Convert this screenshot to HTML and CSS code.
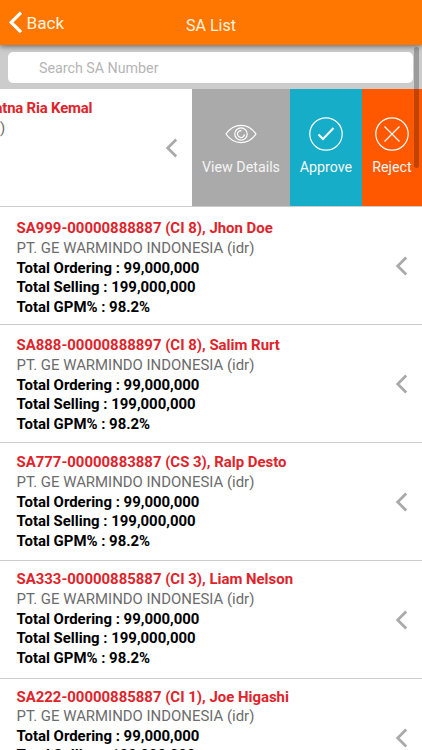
FILE: index.html
```
<!DOCTYPE html>
<html lang="en">
<head>
<meta charset="utf-8">
<title>SA List</title>
<link rel="stylesheet" href="styles.css">
</head>
<body>
<svg class="defs" aria-hidden="true"><symbol id="chevron" viewBox="0 0 12 20"><path d="M10.2 1.5 1.7 10l8.5 8.5"/></symbol></svg>
<div class="screen">
  <header class="topbar">
    <a class="back"><svg viewBox="0 0 14 23"><path d="M12 1.6 2.2 11.4 12 21.2"/></svg><span>Back</span></a>
    <h1>SA List</h1>
  </header>
  <div class="search"><input type="text" placeholder="Search SA Number" aria-label="Search SA Number"></div>
  <main class="list">
    <section class="row swiped">
      <div class="slid"><div class="slid-text"><div class="title">atna Ria Kemal</div><div class="company">)</div></div>
      <svg class="chev"><use href="#chevron"/></svg></div>
      <button class="action view"><svg class="eye" viewBox="0 0 32 20"><path d="M1 10C9-1.5 23-1.5 31 10 23 21.5 9 21.5 1 10Z"/><circle cx="16" cy="10" r="6.2"/><path d="M16.5 6.6a3.5 3.5 0 1 0 3 3.8"/></svg><span>View Details</span></button>
      <button class="action approve"><svg viewBox="0 0 34 34"><circle cx="17" cy="17" r="16.2"/><path class="tick" d="m9.5 17.5 4.5 4.5L24.5 11"/></svg><span>Approve</span></button>
      <button class="action reject"><svg viewBox="0 0 34 34"><circle cx="17" cy="17" r="16.2"/><path d="m9.5 9.5 15 15M24.5 9.5l-15 15"/></svg><span>Reject</span></button>
    </section>
    <section class="row"><div class="info"><div class="title">SA999-00000888887 (CI 8), Jhon Doe</div><div class="company">PT. GE WARMINDO INDONESIA (idr)</div><div>Total Ordering : 99,000,000</div><div>Total Selling : 199,000,000</div><div>Total GPM% : 98.2%</div></div><svg class="chev"><use href="#chevron"/></svg></section>
    <section class="row"><div class="info"><div class="title">SA888-00000888897 (CI 8), Salim Rurt</div><div class="company">PT. GE WARMINDO INDONESIA (idr)</div><div>Total Ordering : 99,000,000</div><div>Total Selling : 199,000,000</div><div>Total GPM% : 98.2%</div></div><svg class="chev"><use href="#chevron"/></svg></section>
    <section class="row"><div class="info"><div class="title">SA777-00000883887 (CS 3), Ralp Desto</div><div class="company">PT. GE WARMINDO INDONESIA (idr)</div><div>Total Ordering : 99,000,000</div><div>Total Selling : 199,000,000</div><div>Total GPM% : 98.2%</div></div><svg class="chev"><use href="#chevron"/></svg></section>
    <section class="row"><div class="info"><div class="title">SA333-00000885887 (CI 3), Liam Nelson</div><div class="company">PT. GE WARMINDO INDONESIA (idr)</div><div>Total Ordering : 99,000,000</div><div>Total Selling : 199,000,000</div><div>Total GPM% : 98.2%</div></div><svg class="chev"><use href="#chevron"/></svg></section>
    <section class="row"><div class="info"><div class="title">SA222-00000885887 (CI 1), Joe Higashi</div><div class="company">PT. GE WARMINDO INDONESIA (idr)</div><div>Total Ordering : 99,000,000</div><div>Total Selling : 199,000,000</div><div>Total GPM% : 98.2%</div></div><svg class="chev"><use href="#chevron"/></svg></section>
  </main>
  <div class="scrollbar"></div>
</div>
</body>
</html>
```
FILE: styles.css
```
* { box-sizing: border-box; }
body { margin: 0; font-family: Roboto, sans-serif; background: #fff; }
.defs { position: absolute; width: 0; height: 0; }
.screen { position: relative; width: 422px; height: 750px; overflow: hidden; display: flex; flex-direction: column; }
.topbar { position: relative; z-index: 2; flex: none; height: 45px; display: grid; grid-template-columns: 1fr auto 1fr; background: #ff7700; color: #fff3df; box-shadow: 0 1px 6px rgba(0,0,0,.55); }
.back { display: flex; align-items: center; gap: 4px; height: 45px; padding: 0 0 0 8.5px; font-size: 17.2px; line-height: 20px; }
.back svg { width: 14px; height: 23px; }
.back span { padding-top: 1px; }
.topbar h1 { margin: 0; font-size: 16px; font-weight: 400; line-height: 20px; padding-top: 16px; }
svg { fill: none; stroke: #fff; stroke-width: 1.2; flex: none; }
.back svg { stroke-width: 3.2; }
.search { flex: none; height: 44px; padding: 7px 9px 6px 8px; background: #ccc; }
.search input { display: block; width: 405px; height: 31px; border: 0; border-radius: 5px; padding: 0 31px; font: 14.25px Roboto, sans-serif; background: #fff; }
.search input::placeholder { color: #b5b5b5; opacity: 1; }
.list { flex: none; }
.row { display: flex; align-items: center; height: 118.1px; border-bottom: 1px solid #ccc; padding: 0 14px 0 16.5px; justify-content: space-between; }
.info { align-self: flex-start; padding-top: 12.4px; font-size: 14.93px; font-weight: 700; line-height: 19.65px; color: #000; white-space: nowrap; }
.row:nth-child(3) .info { padding-top: 11.2px; }
.row:nth-child(4) .info { padding-top: 10.1px; }
.row:nth-child(5) .info { padding-top: 8.9px; }
.row:nth-child(6) .info { padding-top: 8.7px; line-height: 19.2px; }
.title { color: #e0242b; }
.company { color: #6c6c6c; font-weight: 400; }
.chev { width: 12px; height: 20px; stroke: #aaa; stroke-width: 2.8; }
.swiped { padding: 0; justify-content: flex-start; }
.slid { width: 192px; height: 100%; display: flex; justify-content: space-between; align-items: center; padding-right: 14px; overflow: hidden; }
.slid-text { align-self: flex-start; margin-left: -5.5px; padding-top: 10px; font-size: 14.9px; font-weight: 700; line-height: 19.65px; }
.slid-text .title { letter-spacing: -.18px; }
.slid-text .company { padding-left: 5.5px; }
.action { height: 100%; border: 0; padding: 0; display: flex; flex-direction: column; align-items: center; color: #f5f5f5; font: 14.25px/20px Roboto, sans-serif; white-space: nowrap; }
.action svg { width: 34px; height: 34px; margin-top: 28px; margin-bottom: 6px; }
.action .eye { width: 32px; height: 20px; margin: 35px 0 13px; }
.action .tick { stroke-width: 2; }
.view { width: 98px; background: #aaa; }
.approve { width: 72px; background: #16adc8; }
.reject { width: 60px; background: #ff5800; }
.scrollbar { position: absolute; z-index: 1; left: 413.5px; top: 47px; width: 5.5px; height: 121px; border-radius: 3px; background: rgba(0,0,0,.24); }
```
